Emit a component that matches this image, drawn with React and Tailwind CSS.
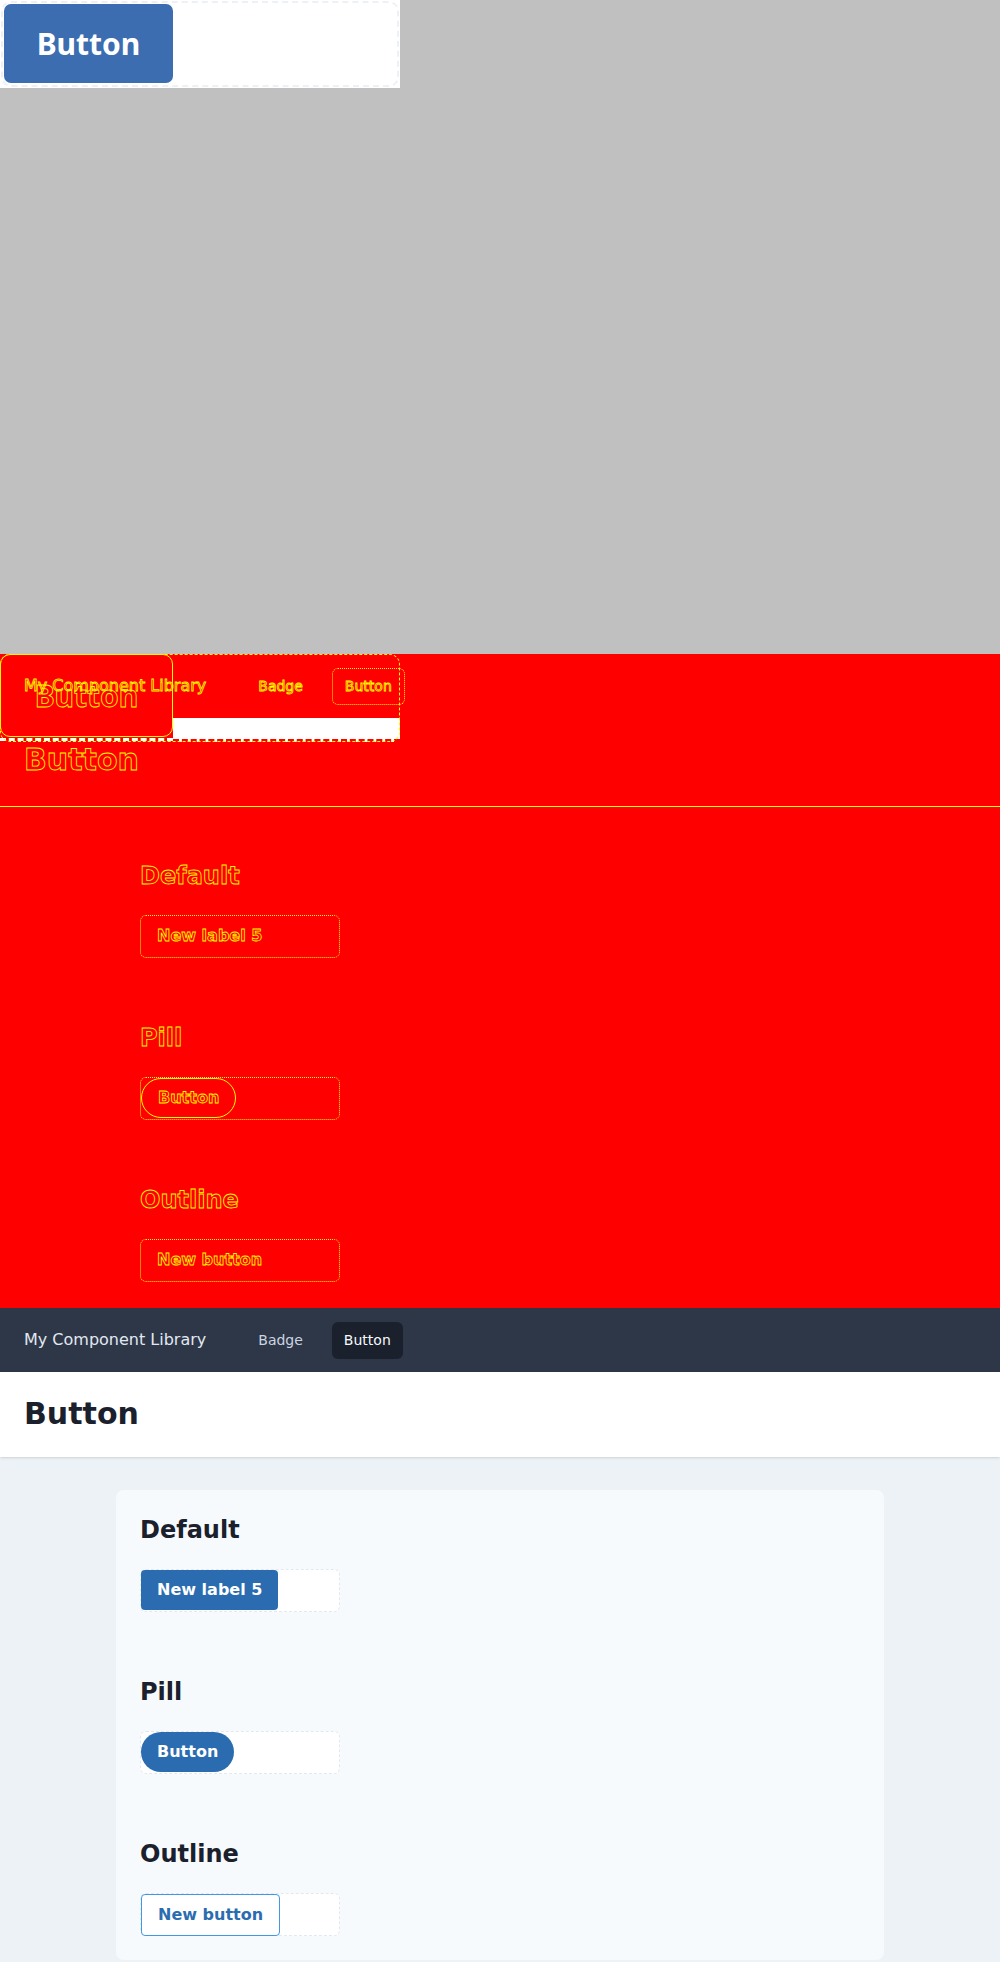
import React from "react";

const SANS = "font-['DejaVu_Sans',sans-serif]";
const STROKE = "text-transparent [-webkit-text-stroke:0.8px_#ffff00]";

const sections = [
  { title: "Default", variant: "solid", label: "New label 5" },
  { title: "Pill", variant: "pill", label: "Button" },
  { title: "Outline", variant: "outline", label: "New button" },
];

const buttonClass = (variant, ghost) => {
  if (ghost) {
    if (variant === "pill") return `h-10 px-4 rounded-full border border-[#ffff00] ${STROKE}`;
    return `h-10 px-4 rounded ${STROKE}`;
  }
  if (variant === "pill") return "h-10 px-4 rounded-full bg-[#2b6cb0] text-white";
  if (variant === "outline")
    return "h-[42px] px-4 rounded border border-[#4299e1] bg-white text-[#2b6cb0]";
  return "h-10 px-4 rounded bg-[#2b6cb0] text-white";
};

const ExpectedPage = ({ ghost = false }) => {
  return (
    <div className={`h-[654px] overflow-hidden ${SANS} ${ghost ? "" : "bg-[#edf2f7]"}`}>
      <nav className={`h-16 flex items-center px-6 ${ghost ? "" : "bg-[#2d3748]"}`}>
        <span className={`text-base ${ghost ? STROKE : "text-[#e2e8f0]"}`}>
          My Component Library
        </span>
        <div className="ml-10 flex items-center gap-[17px]">
          <a className={`h-[37px] px-3 flex items-center text-sm rounded-md ${ghost ? STROKE : "text-[#cbd5e0]"}`}>
            Badge
          </a>
          <a
            className={`h-[37px] px-3 flex items-center text-sm rounded-md ${
              ghost ? `${STROKE} border border-dotted border-[#ffff00]` : "bg-[#1a202c] text-[#f7fafc]"
            }`}
          >
            Button
          </a>
        </div>
      </nav>

      <header className={`relative h-[85px] px-6 py-6 ${ghost ? "" : "bg-white shadow"}`}>
        <h1 className={`text-3xl font-bold leading-9 ${ghost ? STROKE : "text-[#1a202c]"}`}>Button</h1>
        {ghost && <div className="absolute left-0 right-0 top-[88px] h-px bg-[#ffff00]" />}
      </header>

      <main className="pt-[33px]">
        <div className={`mx-auto w-[768px] rounded-lg p-6 ${ghost ? "" : "bg-[#f7fafc]"}`}>
          {sections.map((s, i) => (
            <section key={s.title} className={i > 0 ? "mt-16" : ""}>
              <h2 className={`text-2xl leading-8 font-bold ${ghost ? STROKE : "text-[#1a202c]"}`}>{s.title}</h2>
              <div
                className={`mt-[23px] w-[200px] h-[43px] rounded-md border flex items-start ${
                  ghost ? "border-dotted border-[#ffff00]" : "border-dashed bg-white border-[#e2e8f0]"
                }`}
              >
                <button className={`text-base font-bold ${buttonClass(s.variant, ghost)}`}>{s.label}</button>
              </div>
            </section>
          ))}
        </div>
      </main>
    </div>
  );
};

const ActualShot = () => (
  <div className="h-[654px] bg-[#c0c0c0] overflow-hidden">
    <div className="w-[400px] h-[88px] bg-white p-px">
      <div className="h-full rounded-[10px] border-2 border-dashed border-[#edf1f6] p-px flex">
        <button className="w-[169px] h-[79px] rounded-[7px] bg-[#3b6db0] text-white text-[30px] font-bold font-['Noto_Sans',sans-serif]">
          Button
        </button>
      </div>
    </div>
  </div>
);

const DiffShot = () => (
  <div className="relative h-[654px] bg-[#ff0000] overflow-hidden">
    <div className="absolute left-[173px] top-[64px] w-[227px] h-[24px] bg-white border-b-[3px] border-dashed border-[#ff0000]" />
    <div className="absolute left-0 top-[84px] w-[173px] border-b-[3px] border-dashed border-white" />
    <ExpectedPage ghost />
    <div className="absolute left-0 top-0 w-[400px] h-[88px] rounded-[10px] border border-dashed border-[#ffff00]" />
    <div
      className={`absolute left-0 top-0 w-[173px] h-[83px] rounded-[10px] border border-[#ffff00] flex items-center justify-center text-[30px] font-bold font-['Noto_Sans',sans-serif] ${STROKE}`}
    >
      Button
    </div>
  </div>
);

export default function App() {
  return (
    <div className="w-[1000px] flex flex-col">
      <ActualShot />
      <DiffShot />
      <ExpectedPage />
    </div>
  );
}
